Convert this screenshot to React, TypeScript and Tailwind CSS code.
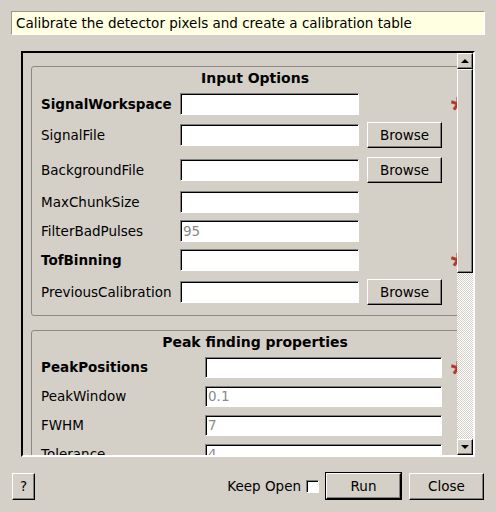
import React from 'react';

interface FieldRow {
  label: string;
  bold?: boolean;
  star?: boolean;
  browse?: boolean;
  value?: string;
  gap: string;
}

const inputOptions: FieldRow[] = [
  { label: 'SignalWorkspace', bold: true, star: true, gap: 'mt-[7px]' },
  { label: 'SignalFile', browse: true, gap: 'mt-[7px]' },
  { label: 'BackgroundFile', browse: true, gap: 'mt-[9px]' },
  { label: 'MaxChunkSize', gap: 'mt-[8px]' },
  { label: 'FilterBadPulses', value: '95', gap: 'mt-[7px]' },
  { label: 'TofBinning', bold: true, star: true, gap: 'mt-[7px]' },
  { label: 'PreviousCalibration', browse: true, gap: 'mt-[8px]' },
];

const peakOptions: FieldRow[] = [
  { label: 'PeakPositions', bold: true, star: true, gap: 'mt-[7px]' },
  { label: 'PeakWindow', value: '0.1', gap: 'mt-[8px]' },
  { label: 'FWHM', value: '7', gap: 'mt-[8px]' },
  { label: 'Tolerance', value: '4', gap: 'mt-[8px]' },
  { label: 'DetectorsPeaks', gap: 'mt-[8px]' },
];

const raised =
  'border border-t-white border-l-white border-b-black border-r-black shadow-[inset_-1px_-1px_0_#808080] bg-[#d4d0c8]';
const sunken =
  'border border-t-[#808080] border-l-[#808080] border-b-white border-r-white shadow-[inset_1px_1px_0_#000] bg-white';

function Star() {
  return (
    <svg width="16" height="16" viewBox="0 0 16 16" className="shrink-0">
      <g stroke="#b5392b" strokeWidth="3" strokeLinecap="butt">
        <line x1="8" y1="8" x2="8" y2="1" />
        <line x1="8" y1="8" x2="14.7" y2="5.8" />
        <line x1="8" y1="8" x2="12.1" y2="13.7" />
        <line x1="8" y1="8" x2="3.9" y2="13.7" />
        <line x1="8" y1="8" x2="1.3" y2="5.8" />
      </g>
    </svg>
  );
}

function TextBox({ value, width, height }: { value?: string; width: string; height: string }) {
  return (
    <div className={`${sunken} ${width} ${height} shrink-0 flex items-center pl-[2px] text-[#8a8a8a]`}>
      {value}
    </div>
  );
}

function Button({ label, className }: { label: string; className: string }) {
  return (
    <div className={`${raised} ${className} shrink-0 flex items-center justify-center text-black`}>
      {label}
    </div>
  );
}

function GroupBox({ title, className, children }: { title: string; className: string; children: React.ReactNode }) {
  return (
    <div className={`w-[448px] border border-[#8c8983] rounded-[3px] pt-[3px] ${className}`}>
      <div className="h-[16px] leading-[16px] text-center font-bold text-[14px]">{title}</div>
      <div className="pl-[9px]">{children}</div>
    </div>
  );
}

export default function App() {
  return (
    <div className="w-[496px] h-[512px] bg-[#d4d0c8] flex flex-col font-['DejaVu_Sans','Liberation_Sans',sans-serif] text-[13.5px] text-black overflow-hidden">
      <div className="mx-[11px] mt-[11px] h-[24px] bg-[#ffffe1] border border-t-[#9c988f] border-l-[#9c988f] border-b-white border-r-white flex items-center pl-[4px]">
        Calibrate the detector pixels and create a calibration table
      </div>

      <div className="mx-[21px] mt-[16px] h-[406px] border-2 border-t-black border-l-black border-b-white border-r-white flex">
        <div className="flex-1 overflow-hidden">
          <div className="w-[470px] pt-[13px] pl-[8px]">
            <GroupBox title="Input Options" className="pb-[10px]">
              {inputOptions.map((row) => (
                <div
                  key={row.label}
                  className={`flex items-center ${row.browse ? 'h-[26px]' : 'h-[22px]'} ${row.gap}`}
                >
                  <div className={`w-[139px] shrink-0 whitespace-nowrap ${row.bold ? 'font-bold' : ''}`}>{row.label}</div>
                  <TextBox value={row.value} width="w-[179px]" height="h-[22px]" />
                  <div className="w-[83px] shrink-0 flex justify-end">
                    {row.browse && <Button label="Browse" className="w-[75px] h-[26px]" />}
                  </div>
                  <div className="ml-[8px] w-[16px] shrink-0">{row.star && <Star />}</div>
                </div>
              ))}
            </GroupBox>

            <GroupBox title="Peak finding properties" className="mt-[14px] pb-[10px]">
              {peakOptions.map((row) => (
                <div key={row.label} className={`flex items-center h-[21px] ${row.gap}`}>
                  <div className={`w-[164px] shrink-0 whitespace-nowrap ${row.bold ? 'font-bold' : ''}`}>{row.label}</div>
                  <TextBox value={row.value} width="w-[237px]" height="h-[21px]" />
                  <div className="ml-[8px] w-[16px] shrink-0">{row.star && <Star />}</div>
                </div>
              ))}
            </GroupBox>
          </div>
        </div>

        {/* vertical scrollbar */}
        <div className="w-[16px] shrink-0 flex flex-col">
          <div className={`${raised} h-[16px] shrink-0 flex items-center justify-center`}>
            <div className="w-0 h-0 border-l-[4px] border-r-[4px] border-b-[4px] border-l-transparent border-r-transparent border-b-black" />
          </div>
          <div className={`${raised} h-[204px] shrink-0`} />
          <div className="flex-1 bg-[repeating-conic-gradient(#ffffff_0_25%,#d4d0c8_0_50%)] bg-[length:2px_2px]" />
          <div className={`${raised} h-[16px] shrink-0 flex items-center justify-center`}>
            <div className="w-0 h-0 border-l-[4px] border-r-[4px] border-t-[4px] border-l-transparent border-r-transparent border-t-black" />
          </div>
        </div>
      </div>

      <div className="mt-[15px] h-[28px] flex items-center pl-[12px] pr-[12px]">
        <Button label="?" className="w-[23px] h-[27px]" />
        <div className="flex-1" />
        <span>Keep Open</span>
        <div className={`${sunken} ml-[5px] w-[13px] h-[13px]`} />
        <div className="ml-[6px] w-[77px] h-[28px] border border-black shrink-0 flex">
          <Button label="Run" className="flex-1 h-full" />
        </div>
        <Button label="Close" className="ml-[7px] w-[75px] h-[27px]" />
      </div>
    </div>
  );
}
